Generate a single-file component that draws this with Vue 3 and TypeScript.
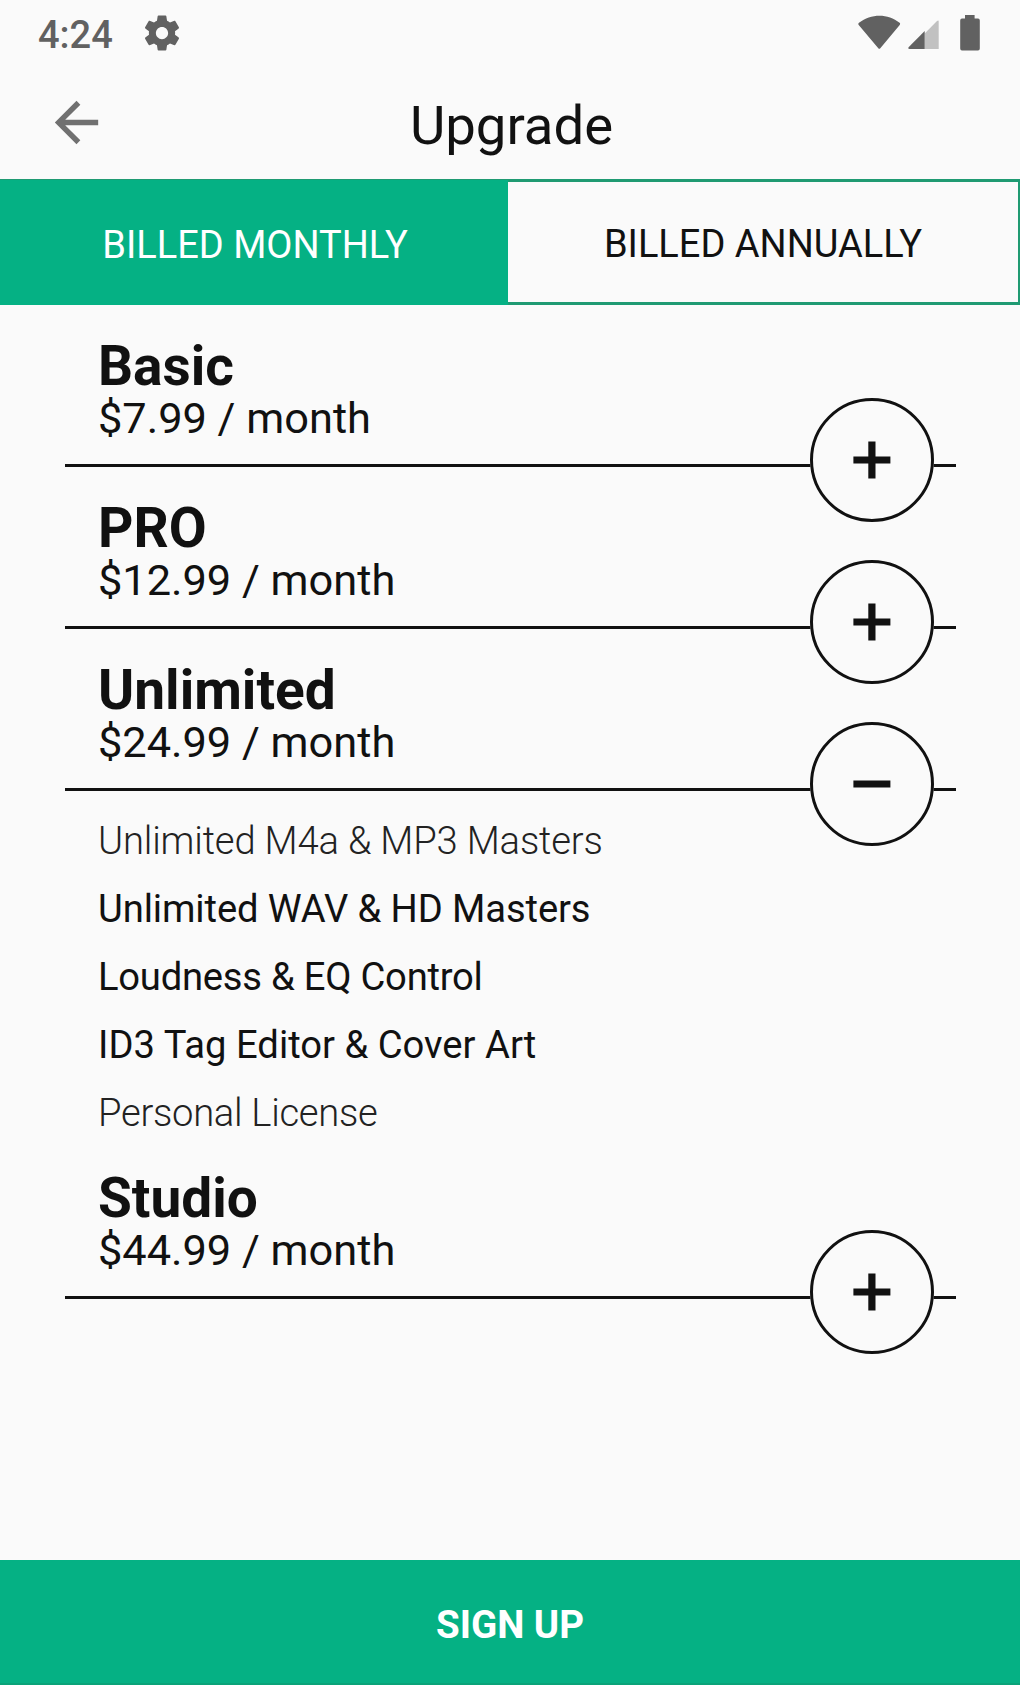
<script setup lang="ts">
import { computed, ref } from 'vue'

interface Feature {
  label: string
  tracking: number
  light?: boolean
}

interface Plan {
  name: string
  price: string
  features: Feature[]
}

const billing = ref<'monthly' | 'annually'>('monthly')
const openPlan = ref<string | null>('Unlimited')

const plans: Plan[] = [
  { name: 'Basic', price: '$7.99 / month', features: [] },
  { name: 'PRO', price: '$12.99 / month', features: [] },
  {
    name: 'Unlimited',
    price: '$24.99 / month',
    features: [
      { label: 'Unlimited M4a & MP3 Masters', tracking: -0.17, light: true },
      { label: 'Unlimited WAV & HD Masters', tracking: -0.11 },
      { label: 'Loudness & EQ Control', tracking: -0.24 },
      { label: 'ID3 Tag Editor & Cover Art', tracking: 0 },
      { label: 'Personal License', tracking: -0.3, light: true },
    ],
  },
  { name: 'Studio', price: '$44.99 / month', features: [] },
]

const isMonthly = computed(() => billing.value === 'monthly')

function toggle(name: string): void {
  openPlan.value = openPlan.value === name ? null : name
}
</script>

<template>
  <div class="screen">
    <div class="status">
      <span class="clock">4:24</span>
      <svg class="gear" viewBox="0 0 24 24">
        <path d="M19.43 12.98c.04-.32.07-.64.07-.98s-.03-.66-.07-.98l2.11-1.65c.19-.15.24-.42.12-.64l-2-3.46c-.12-.22-.39-.3-.61-.22l-2.49 1c-.52-.4-1.08-.73-1.69-.98l-.38-2.65C14.46 2.18 14.25 2 14 2h-4c-.25 0-.46.18-.49.42l-.38 2.65c-.61.25-1.17.59-1.69.98l-2.49-1c-.23-.09-.49 0-.61.22l-2 3.46c-.13.22-.07.49.12.64l2.11 1.65c-.04.32-.07.65-.07.98s.03.66.07.98l-2.11 1.65c-.19.15-.24.42-.12.64l2 3.46c.12.22.39.3.61.22l2.49-1c.52.4 1.08.73 1.69.98l.38 2.65c.03.24.24.42.49.42h4c.25 0 .46-.18.49-.42l.38-2.65c.61-.25 1.17-.59 1.69-.98l2.49 1c.23.09.49 0 .61-.22l2-3.46c.12-.22.07-.49-.12-.64l-2.11-1.65zM12 15.5c-1.93 0-3.5-1.57-3.5-3.5s1.57-3.5 3.5-3.5 3.5 1.57 3.5 3.5-1.57 3.5-3.5 3.5z" />
      </svg>
      <svg class="system" viewBox="0 0 124 40">
        <path d="M0.7 11 Q-0.2 9.6 1 8.8 C13 -0.6 30 -0.6 41.6 8.8 Q42.6 9.6 41.7 11 L22.3 34.2 Q21.3 35.2 20.3 34.2 Z" />
        <path class="faint" d="M66.7 19.5 L79 7 Q80.7 5.6 80.7 7.8 V35 H66.7 Z" />
        <path d="M66.7 17 V35 H51.6 Q49.4 34.6 50.8 32.9 Z" />
        <path d="M107 1 H116.6 V4.6 H120 Q121.8 4.6 121.8 6.4 V34.4 Q121.8 36.4 120 36.4 H104 Q102.2 36.4 102.2 34.4 V6.4 Q102.2 4.6 104 4.6 H107 Z" />
      </svg>
    </div>

    <header class="bar">
      <svg class="back" viewBox="0 0 24 24">
        <path d="M20 11H7.83l5.59-5.59L12 4l-8 8 8 8 1.41-1.41L7.83 13H20v-2z" />
      </svg>
      <h1>Upgrade</h1>
    </header>

    <div class="tabs">
      <button class="tab first" :class="{ active: isMonthly }" @click="billing = 'monthly'">
        BILLED MONTHLY
      </button>
      <button class="tab" :class="{ active: !isMonthly }" @click="billing = 'annually'">
        BILLED ANNUALLY
      </button>
    </div>

    <main class="plans">
      <section v-for="plan in plans" :key="plan.name">
        <div class="plan">
          <h2>{{ plan.name }}</h2>
          <p class="price">{{ plan.price }}</p>
          <button class="toggle" @click="toggle(plan.name)">
            <svg viewBox="0 0 124 124">
              <circle cx="62" cy="62" r="60.5" />
              <path v-if="openPlan === plan.name" d="M43.4 62H80.4" />
              <path v-else d="M43.4 62H80.4M61.9 43.5V80.5" />
            </svg>
          </button>
        </div>
        <ul v-if="openPlan === plan.name" class="features">
          <li
            v-for="f in plan.features"
            :key="f.label"
            :class="{ light: f.light }"
            :style="{ letterSpacing: f.tracking + 'px' }"
          >
            {{ f.label }}
          </li>
        </ul>
      </section>
    </main>

    <button class="signup">SIGN UP</button>
  </div>
</template>

<style>
body {
  background: #fafafa;
}
</style>

<style scoped>
.screen {
  display: flex;
  flex-direction: column;
  box-sizing: border-box;
  width: 1020px;
  height: 1685px;
  overflow: hidden;
  background: #fafafa;
  color: #111;
  font-family: Roboto, "Liberation Sans", sans-serif;
}

button {
  margin: 0;
  padding: 0;
  border: 0;
  border-radius: 0;
  background: none;
  color: inherit;
  font: inherit;
}

h1,
h2,
p,
ul {
  margin: 0;
  padding: 0;
}

svg {
  display: block;
}

.status {
  display: flex;
  flex: none;
  height: 66px;
  box-sizing: border-box;
  padding: 0 38px;
  color: #616161;
  fill: #616161;
}

.clock {
  width: 103px;
  padding-top: 14px;
  font-size: 38px;
  font-weight: 500;
  line-height: 42px;
}

.gear {
  width: 42px;
  height: 42px;
  margin-top: 11.5px;
}

.system {
  width: 124px;
  height: 40px;
  margin: 14px 0 0 auto;
}

.faint {
  fill: #c1c1c1;
}

.bar {
  display: grid;
  grid-template-columns: 65px 1fr 65px;
  flex: none;
  height: 113px;
  padding: 0 44px;
  fill: #707070;
}

.back {
  width: 65px;
  height: 65px;
  margin-top: 24px;
}

h1 {
  padding: 27px 0 0 3px;
  font-size: 54.5px;
  font-weight: 400;
  line-height: 64px;
  text-align: center;
}

.tabs {
  display: flex;
  flex: none;
  height: 126px;
  box-sizing: border-box;
  border: 3px solid #1f9a72;
  border-width: 3px 2px 3px 0;
}

.tab {
  flex: 1;
  padding-top: 4px;
  font-size: 38px;
}

.tab.first {
  flex: 0 0 508px;
  padding-left: 2px;
}

.tab.active {
  margin: -2px 0 -3px;
  background: #05b184;
  color: #fff;
}

.plans {
  flex: 1;
  padding: 0 64px 0 65px;
}

.plan {
  position: relative;
  height: 162px;
  box-sizing: border-box;
  padding: 36px 0 0 33px;
  border-bottom: 3px solid #111;
}

h2 {
  font-size: 55px;
  font-weight: 700;
  line-height: 51px;
}

.price {
  padding-top: 1px;
  font-size: 43.35px;
  line-height: 52px;
}

.toggle {
  position: absolute;
  top: 93px;
  right: 22px;
  width: 124px;
  height: 124px;
  border-radius: 50%;
  background: #fafafa;
}

.toggle svg {
  width: 124px;
  height: 124px;
  fill: none;
  stroke: #111;
}

.toggle circle {
  stroke-width: 3;
}

.toggle path {
  stroke-width: 7.2;
}

.features {
  display: flex;
  flex-direction: column;
  gap: 20px;
  height: 345.5px;
  box-sizing: border-box;
  padding: 26px 0 0 33px;
  list-style: none;
  font-size: 38.2px;
  line-height: 48px;
}

.light {
  color: #222;
  font-weight: 300;
}

.signup {
  flex: none;
  height: 125.5px;
  padding-top: 6px;
  border-bottom: 2px solid #0aa379;
  background: #05b184;
  color: #fff;
  font-size: 38.5px;
  font-weight: 700;
}
</style>
